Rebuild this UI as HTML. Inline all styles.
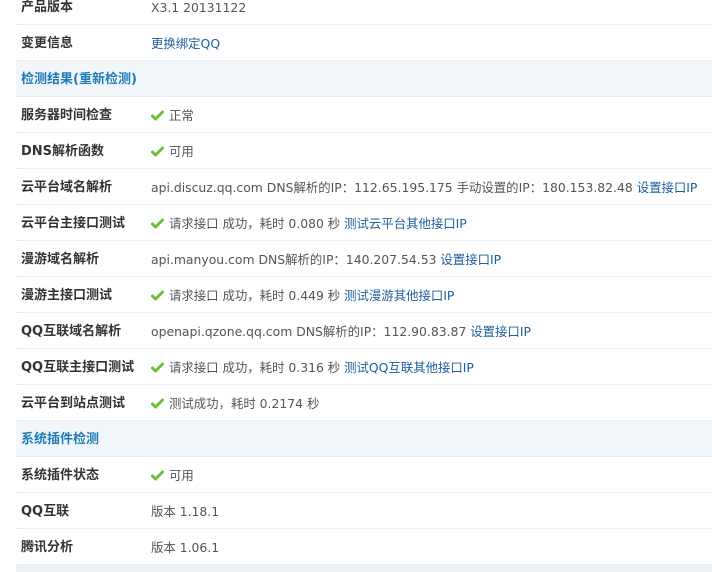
<!DOCTYPE html>
<html><head><meta charset="utf-8"><style>
body{margin:0;width:712px;height:572px;overflow:hidden;background:#fff;font-family:"DejaVu Sans","Noto Sans CJK SC",sans-serif;font-size:12.4px;color:#555;position:relative}
.r{position:absolute;left:16px;right:0;height:35px;border-bottom:1px dotted #dde3ea}
.h{background:#f2f7fc}
.l{position:absolute;left:5px;top:1px;line-height:35px;font-weight:bold;color:#333;font-size:13px}
.h .l{color:#1f7bb5}
.v{position:absolute;left:135px;top:1px;line-height:35px;white-space:nowrap}
a{color:#1e5d9e;text-decoration:none}
.ck{display:inline-block;width:13px;height:11px;vertical-align:-1px;margin-right:5px}
.bot{position:absolute;left:16px;right:0;top:565px;height:7px;background:#eef2f7}
</style></head><body>
<svg width="0" height="0" style="position:absolute"><defs><symbol id="c" viewBox="0 0 13 11"><path d="M1.5 6 L4.5 9 L11.5 2" fill="none" stroke="#6cbf35" stroke-width="3" stroke-linecap="round" stroke-linejoin="round"/></symbol></defs></svg>
<div class="r" style="top:-11px"><span class="l">产品版本</span><span class="v">X3.1 20131122</span></div>
<div class="r" style="top:25px"><span class="l">变更信息</span><span class="v"><a>更换绑定QQ</a></span></div>
<div class="r h" style="top:61px"><span class="l">检测结果(重新检测)</span></div>
<div class="r" style="top:97px"><span class="l">服务器时间检查</span><span class="v"><svg class="ck"><use href="#c"/></svg>正常</span></div>
<div class="r" style="top:133px"><span class="l">DNS解析函数</span><span class="v"><svg class="ck"><use href="#c"/></svg>可用</span></div>
<div class="r" style="top:169px"><span class="l">云平台域名解析</span><span class="v">api.discuz.qq.com DNS解析的IP：112.65.195.175 手动设置的IP：180.153.82.48 <a>设置接口IP</a></span></div>
<div class="r" style="top:205px"><span class="l">云平台主接口测试</span><span class="v"><svg class="ck"><use href="#c"/></svg>请求接口 成功，耗时 0.080 秒 <a>测试云平台其他接口IP</a></span></div>
<div class="r" style="top:241px"><span class="l">漫游域名解析</span><span class="v">api.manyou.com DNS解析的IP：140.207.54.53 <a>设置接口IP</a></span></div>
<div class="r" style="top:277px"><span class="l">漫游主接口测试</span><span class="v"><svg class="ck"><use href="#c"/></svg>请求接口 成功，耗时 0.449 秒 <a>测试漫游其他接口IP</a></span></div>
<div class="r" style="top:313px"><span class="l">QQ互联域名解析</span><span class="v">openapi.qzone.qq.com DNS解析的IP：112.90.83.87 <a>设置接口IP</a></span></div>
<div class="r" style="top:349px"><span class="l">QQ互联主接口测试</span><span class="v"><svg class="ck"><use href="#c"/></svg>请求接口 成功，耗时 0.316 秒 <a>测试QQ互联其他接口IP</a></span></div>
<div class="r" style="top:385px"><span class="l">云平台到站点测试</span><span class="v"><svg class="ck"><use href="#c"/></svg>测试成功，耗时 0.2174 秒</span></div>
<div class="r h" style="top:421px"><span class="l">系统插件检测</span></div>
<div class="r" style="top:457px"><span class="l">系统插件状态</span><span class="v"><svg class="ck"><use href="#c"/></svg>可用</span></div>
<div class="r" style="top:493px"><span class="l">QQ互联</span><span class="v">版本 1.18.1</span></div>
<div class="r" style="top:529px"><span class="l">腾讯分析</span><span class="v">版本 1.06.1</span></div>
<div class="bot"></div>
</body></html>
